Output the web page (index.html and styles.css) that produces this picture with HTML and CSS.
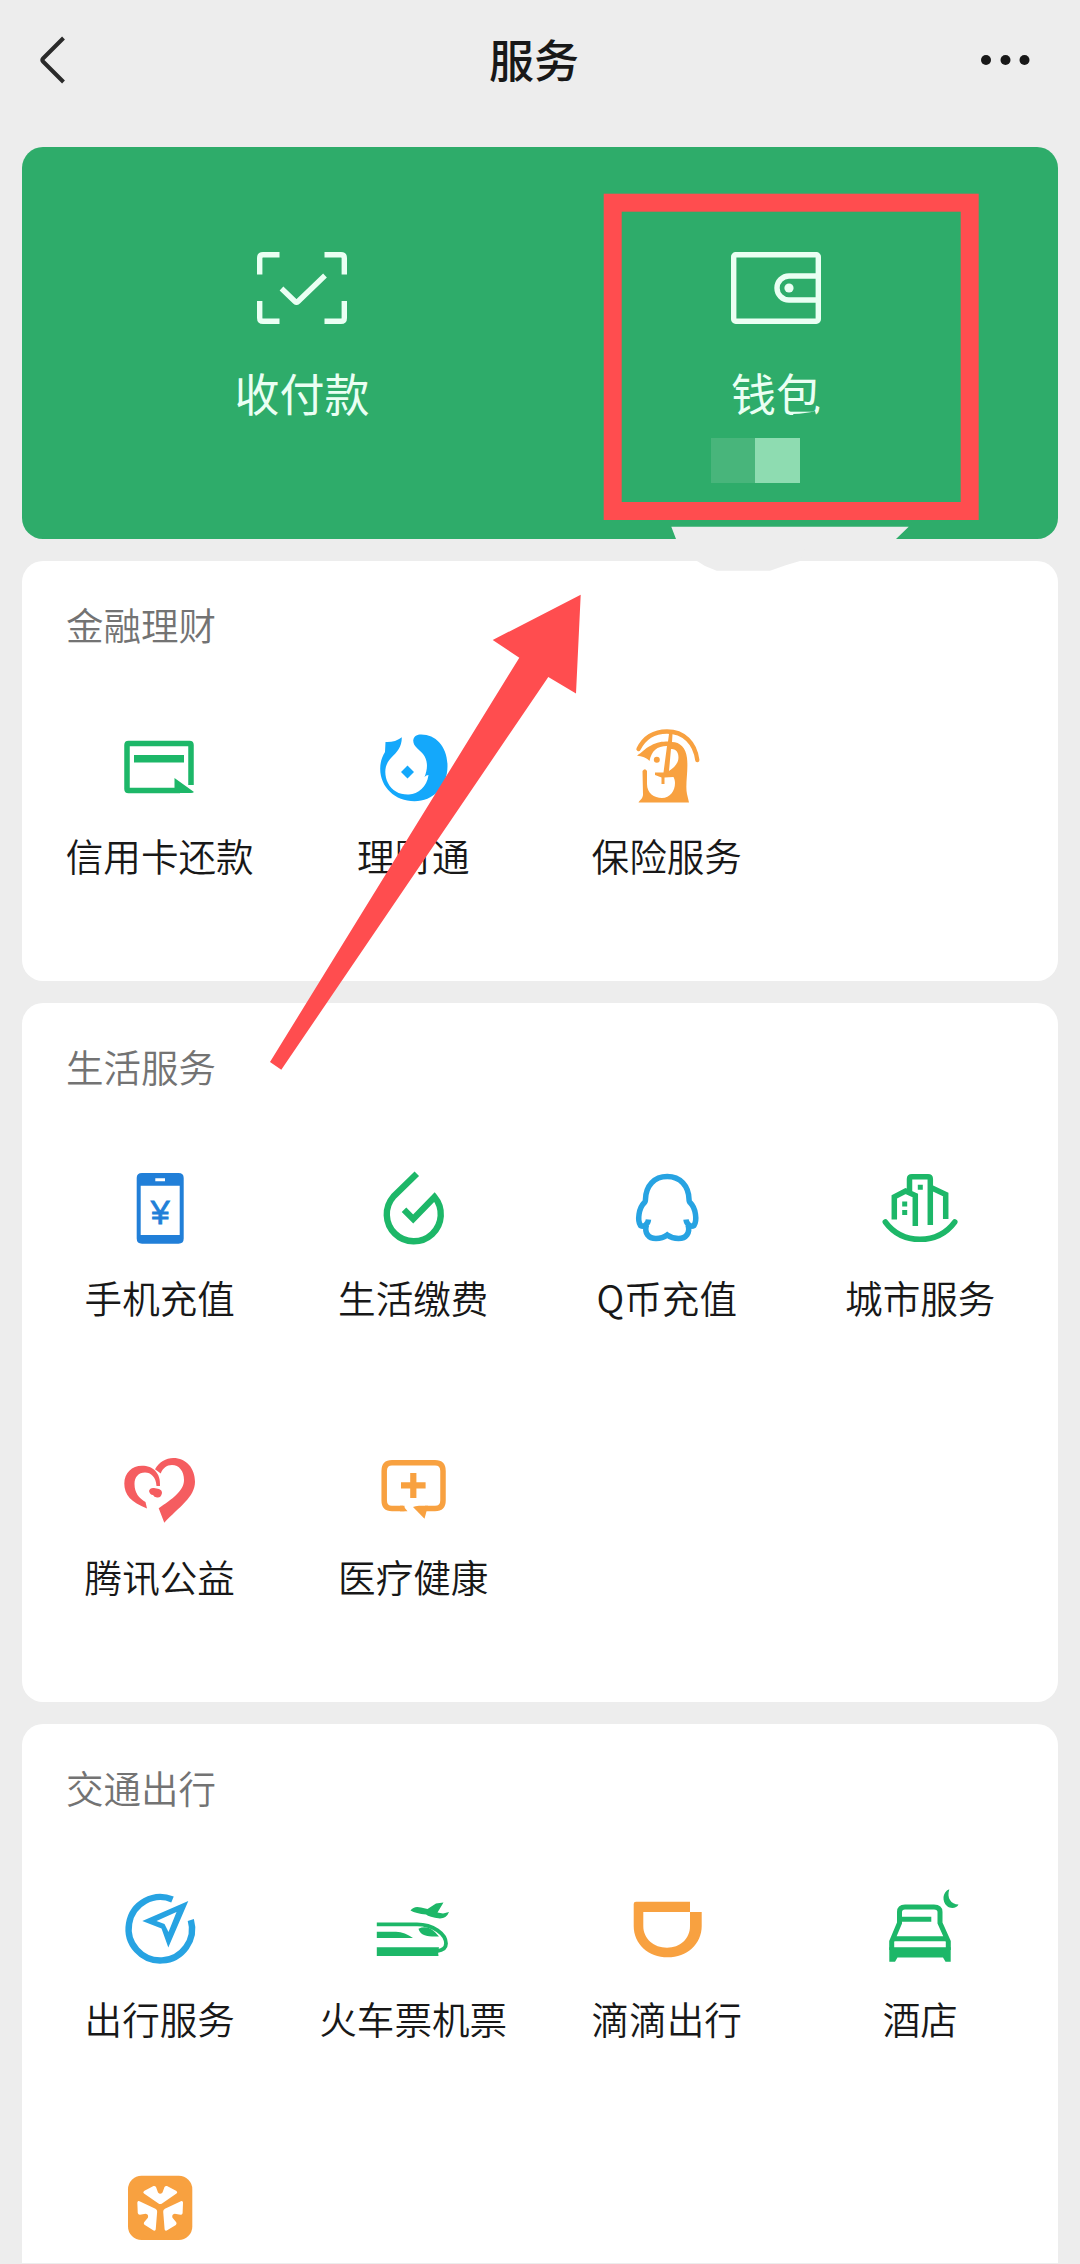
FILE: index.html
```html
<!DOCTYPE html>
<html lang="zh-CN">
<head>
<meta charset="utf-8">
<title>服务</title>
<link rel="stylesheet" href="styles.css">
</head>
<body>
<div class="screen">
  <header class="navbar">
    <svg class="back" viewBox="0 0 30 52"><path d="M25.500 4 L5 24.500 Q3.500 26 5 27.500 L25.500 48"/></svg>
    <h1 class="title">服务</h1>
    <svg class="more" viewBox="0 0 50 12"><circle cx="6" cy="6" r="5"/><circle cx="25.500" cy="6" r="5"/><circle cx="44.500" cy="6" r="5"/></svg>
  </header>

  <main class="content">
    <section class="pay">
      <a class="pay-item">
        <svg class="pay-icon" viewBox="0 0 90 72"><path d="M2.700 22.500 V6 Q2.700 2.700 6 2.700 H22.500 M67.500 2.700 H84 Q87.300 2.700 87.300 6 V22.500 M87.300 49 V66 Q87.300 69.300 84 69.300 H67.500 M22.500 69.300 H6 Q2.700 69.300 2.700 66 V49"/><path d="M24.500 36.500 L38 49.500 Q39.500 51 41 49.500 L68 23.500"/></svg>
        <span class="pay-label">收付款</span>
      </a>
      <a class="pay-item">
        <svg class="pay-icon" viewBox="0 0 90 72"><rect x="2.700" y="2.700" width="84.600" height="66.600" rx="2"/><path d="M87 24 H58 A12 12 0 0 0 58 48 H87"/><circle class="dot" cx="58" cy="36" r="4.600"/></svg>
        <span class="pay-label">钱包</span>
        <span class="mosaic"><i></i><i></i></span>
      </a>
    </section>

    <section class="card">
      <h2 class="card-title">金融理财</h2>
      <div class="grid">
        <a class="item"><svg class="icon green" viewBox="0 0 80 80"><path class="line" d="M71 58 V18 Q71 16.500 69.500 16.500 H8.500 Q7 16.500 7 18 V62 Q7 63.500 8.500 63.500 H60"/><path d="M14 28h50v7.500H14zM54.500 51 L74 65 Q73 66 71 66 H54.500z"/></svg><span>信用卡还款</span></a>
        <a class="item"><svg class="icon sky" viewBox="0 0 80 80"><path d="M12.500 15 Q22 15.500 28.800 10.200 C29 20 24 25 18 31 C11 38 11 48 15 56 C19 64 27 68 36 67.500 C45 67 54 60 55.500 48 Q53 48 51.500 50 C55 42 55 33 50 27 C46 22 40.500 20 40.200 13.500 C41 9 44 7.600 48.200 7.600 C63 7.600 74.500 20 74.500 39 C74.500 60 60 74.200 41.500 74.200 C22 74.200 7.200 60 7.200 41.700 C7.200 35 9 30 12 25Z M34.500 38.500 L41 45 L34.500 51.500 L28 45Z"/></svg><span>理财通</span></a>
        <a class="item"><svg class="icon orange" viewBox="0 0 80 80"><path class="line umbrella" d="M11.500 22 C18 9 29 4.500 40 4.500 C57 4.500 68 16 70.300 33"/><path fill-rule="evenodd" d="M10 28.500 C15 25.500 17 22 24 18.500 C30 15 35 14.500 41 14.500 L42 7 H45.500 L45 15 C53 15 59 21 60 31 C61.500 44 58 58 60 67 L62 75.500 H11.500 C13 73 15.500 72 16 68 L15.500 44 Q18 40.500 20 44 L20 57 C20 66 27 71 35 71 C43 71 48 64 48 56 C48 52 46.500 50.500 46.500 50 L37.500 50.500 V57 H34.500 V50.500 L28 48 V45.500 H36.500 L40 19 C30 19 24.500 24 22.500 34 C19.500 30.500 15 29.500 10 28.500Z M44 22 L42 44 C48 40 53 35 51 27 C50 23 47 22 44 22Z"/><circle cx="29.800" cy="32.700" r="3"/></svg><span>保险服务</span></a>
      </div>
    </section>

    <section class="card">
      <h2 class="card-title">生活服务</h2>
      <div class="grid">
        <a class="item"><svg class="icon blue" viewBox="0 0 80 80"><path fill-rule="evenodd" d="M22 4 H58.500 Q63.700 4 63.700 9 V69.500 Q63.700 74.700 58.500 74.700 H22 Q16.700 74.700 16.700 69.500 V9 Q16.700 4 22 4Z M20.700 16.700 V66 H59.700 V16.700Z M35.300 9.300 V12.300 H45 V9.300Z"/><text x="40.200" y="54.500">¥</text></svg><span>手机充值</span></a>
        <a class="item"><svg class="icon green" viewBox="0 0 80 80"><path class="line thick" d="M43.800 4.800 L20.500 27.500 A27 27 0 1 0 61.500 28 L40.200 50 L31 40.800"/></svg><span>生活缴费</span></a>
        <a class="item"><svg class="icon azure" viewBox="0 0 80 80"><path class="line" d="M21.500 50.500 C21 55 17 58.500 13.500 56.500 C10 51 12 39 17 34 Q18.500 33 18.500 30 C19 17 27 7.500 40.200 7.500 S61.500 17 62 30 Q62 33 63.500 34 C68.500 39 70.500 51 67 56.500 C63.500 58.500 59.500 55 59 50.500"/><path class="line" d="M19.500 56 C17 64 21.500 69.500 29 69.500 Q35.500 69.500 40.200 66 Q45 69.500 51.500 69.500 C59 69.500 63.500 64 61 56"/></svg><span>Q币充值</span></a>
        <a class="item"><svg class="icon green" viewBox="0 0 80 80"><path class="line" d="M14.300 50.500 V27.800 L25.500 22 L35.300 26.500 V57 M29.500 22 V10 Q29.500 7.700 32 7.700 H48 Q50.300 7.700 50.300 10 V56 M52 19 L65.700 25.500 V50"/><path class="line round" d="M5.300 53 Q18 70.300 40 70.300 T74.800 53"/><path d="M37.800 15.800h5v5h-5zM22.200 32.500h5v5h-5zM22.200 41h5v5h-5z"/></svg><span>城市服务</span></a>
        <a class="item"><svg class="icon red" viewBox="0 0 80 80"><path d="M27 60.500 C11 54 4.300 47 4.300 35.500 C4.300 25 12 17.700 22 17.700 C33 17.700 41 25 40 38 L36.500 38 C36 29 31 24.500 25 24.500 C18.500 24.500 14.500 29 14.500 36 C14.500 45 19 50 25.500 54 Z M35 21.300 C39 14 46 10 53.300 10 C66 10 75 20 75 33.700 C75 49 59 59 44.300 74.700 L38.700 60.300 C52 51 64 43 64 32 C64 23 59 17 52 17 C46.500 17 43 20 40.700 25.500 Z M29 43 Q30 39.500 34 40 L39 41 Q42 42 42 45 Q41 50 37 49.500 Q34 49 33 47 Q30 47 29 43Z"/></svg><span>腾讯公益</span></a>
        <a class="item"><svg class="icon orange" viewBox="0 0 80 80"><path class="line" d="M31.500 60.500 H19 Q11.200 60.500 11.200 52.500 V23 Q11.200 14.800 19 14.800 H62 Q70 14.800 70 23 V52.500 Q70 60.500 62 60.500 H52"/><path d="M30 57.800 L34.500 63.200 H27V57.800z M40 59 Q42 58 46 57.800 H55 L51.500 70.700Z M37.200 25 h6.200v9.300h9.200v6.300h-9.200V50h-6.200v-9.400h-9.200v-6.300h9.200z"/></svg><span>医疗健康</span></a>
      </div>
    </section>

    <section class="card last">
      <h2 class="card-title">交通出行</h2>
      <div class="grid">
        <a class="item"><svg class="icon azure" viewBox="0 0 80 80"><path class="line thick" d="M52.500 9.500 A31.700 31.700 0 1 0 70.800 30"/><path fill-rule="evenodd" d="M22.300 31 L68.300 11 L48.300 57.500 L41.500 38.500Z M36.500 31 L44.500 34 L48.500 42 L56.500 22Z"/></svg><span>出行服务</span></a>
        <a class="item"><svg class="icon green" viewBox="0 0 80 80"><path class="line thin" d="M3.800 34.300 H44 C60 34.300 73 44 73 53.500 Q73 60 64 61"/><path d="M3.800 57.300 H66 Q64.500 61.500 65.500 66 H3.800Z M3.800 41.700 H23 Q32 42 40 48 H3.800Z M45.500 38.700 Q56 33.500 66 46.500 C55 47 47 45.500 45.500 38.700Z M37.500 20.500 Q41 15.500 48 17.500 L54.500 19 L63 13.500 L70.500 12.500 L64.500 22.500 L70 23.500 L76 22 Q73.500 28.500 67 28.500 Q56 27 53 24.500 Q43 23.500 37.500 20.500Z"/></svg><span>火车票机票</span></a>
        <a class="item"><svg class="icon orange" viewBox="0 0 80 80"><path d="M6.700 14 Q6.700 11.700 9 11.700 H63 V22 H16.300 V36 C16.300 49 27 57.700 40 57.700 S63 49 63 36 V22 H74.700 V36 C74.700 54 60 67.300 40.700 67.300 S6.700 54 6.700 36Z"/></svg><span>滴滴出行</span></a>
        <a class="item"><svg class="icon green" viewBox="0 0 80 80"><path class="line slim" d="M11.700 60 V51.500 L19.500 33 V22 Q19.500 17 25 17 H54 Q60 17 60 22 V33 L68.300 51.500 V60 M19 29.300 H51.300 M12 48.700 H67.500"/><path d="M9.300 57.300 H70.700 V71.700 H65.500 L63 67.500 H17.500 L15 71.700 H9.300Z M69.300 -.7 C62 2 62 12 67 16 C71 19.500 77 18 78.500 14.500 C71 14.500 66.500 8 69.300 -.7Z"/></svg><span>酒店</span></a>
        <a class="item"><svg class="icon orange" viewBox="0 0 80 80"><rect x="8" y="6.700" width="64.300" height="64.300" rx="13.500"/><g class="leaf"><path id="leaf" d="M24 22 L33.500 17 Q35 16.500 36 18 L38 23.500 Q40.200 26 42.500 23.500 L44.500 18 Q45.500 16.500 47 17 L56.500 22 Q58 23.500 56.500 24.500 L42 34.500 Q40.200 35.700 38.500 34.500 L24 24.500 Q22.500 23.500 24 22Z"/><use href="#leaf" transform="rotate(120 40.200 39)"/><use href="#leaf" transform="rotate(240 40.200 39)"/></g></svg></a>
      </div>
    </section>
  </main>

  <svg class="marks" viewBox="0 0 1080 2264">
    <path class="smudge" d="M671.300 526.700 H908.700 L896 539 L893 545 H806 L800 561 Q785 565 770 570.700 H716.700 L705 566 L697 561 L676 539Z"/>
    <path class="cover" d="M793 414 Q806 413.500 815 411 L816 415 Q812 418 795 418Z"/>
    <rect class="frame" x="612.700" y="202.700" width="357" height="308.300"/>
    <path class="arrow" d="M580.700 594.800 L492.700 640 L519.300 657.700 L270 1062 L281.300 1069.800 L548.300 677 L576 693.600Z"/>
  </svg>
</div>
</body>
</html>
```
FILE: styles.css
```css
* { box-sizing: border-box; }

body {
  margin: 0;
  background: #ededed;
  color: #181818;
  font-family: "Noto Sans CJK SC", sans-serif;
}

.screen {
  position: relative;
  width: 1080px;
  height: 2264px;
  overflow: hidden;
}

/* navigation bar */
.navbar {
  height: 147px;
  padding: 0 50px 27px 38px;
  display: grid;
  grid-template-columns: 50px 1fr 50px;
  align-items: center;
}
.back { width: 30px; height: 52px; fill: none; stroke: #2a2a2a; stroke-width: 4; }
.title {
  margin: 0;
  padding-bottom: 2px;
  text-align: center;
  font-size: 45px;
  font-weight: 500;
  line-height: 60px;
}
.more { width: 50px; height: 12px; fill: #181818; }

.content {
  padding: 0 22px;
  display: flex;
  flex-direction: column;
  gap: 22px;
}

/* green payment panel */
.pay {
  height: 392px;
  padding: 105px 45px 0 43px;
  display: grid;
  grid-template-columns: 1fr 1fr;
  background: #2eac6a;
  border-radius: 21px;
}
.pay-item {
  display: flex;
  flex-direction: column;
  align-items: center;
  color: #eafff3;
}
.pay-icon {
  width: 90px;
  height: 72px;
  fill: none;
  stroke: #eafff3;
  stroke-width: 5.400;
}
.pay-icon .dot { fill: #eafff3; stroke: none; }
.pay-label { margin-top: 39px; font-size: 45px; line-height: 60px; }
.mosaic { display: flex; margin: 15px 42px 0 0; }
.mosaic i { width: 44.500px; height: 44.500px; background: #48b57b; }
.mosaic i + i { background: #8edcb1; }

/* service cards */
.card {
  padding: 0 11px 13px;
  background: #fff;
  border-radius: 21px;
}
.card.last { height: 539px; padding-bottom: 0; border-radius: 21px 21px 0 0; overflow: hidden; }
.card-title {
  margin: 0;
  padding: 0 0 3px 33px;
  color: #737373;
  font-size: 37.500px;
  font-weight: 350;
  line-height: 125px;
}
.grid { display: grid; grid-template-columns: repeat(4, 1fr); grid-auto-rows: 279px; }
.item {
  padding-top: 38px;
  display: flex;
  flex-direction: column;
  align-items: center;
  gap: 19.500px;
  font-size: 37.600px;
  font-weight: 350;
  line-height: 56px;
  white-space: nowrap;
}

.icon { width: 80px; height: 80px; overflow: visible; fill: currentColor; }
.icon .line { fill: none; stroke: currentColor; stroke-width: 5.500; }
.icon .thick { stroke-width: 6.400; }
.icon .slim { stroke-width: 5; }
.icon .thin { stroke-width: 3.800; }
.icon .umbrella { stroke-width: 4.300; stroke-linecap: round; }
.icon .round { stroke-linecap: round; }
.icon text { font: 34px "Liberation Sans", sans-serif; text-anchor: middle; stroke: currentColor; stroke-width: .8; }
.icon .leaf { fill: #fff; }
.green { color: #1db768; }
.sky { color: #14a8fb; }
.azure { color: #27a3e2; }
.blue { color: #217fd8; }
.orange { color: #f8a140; }
.red { color: #f55d60; }

/* annotation drawn over the page */
.marks { position: absolute; left: 0; top: 0; width: 1080px; height: 2264px; pointer-events: none; }
.smudge { fill: #ededed; }
.cover { fill: #2eac6a; }
.frame { fill: none; stroke: #ff4d4f; stroke-width: 18; }
.arrow { fill: #ff4d4f; }
```
